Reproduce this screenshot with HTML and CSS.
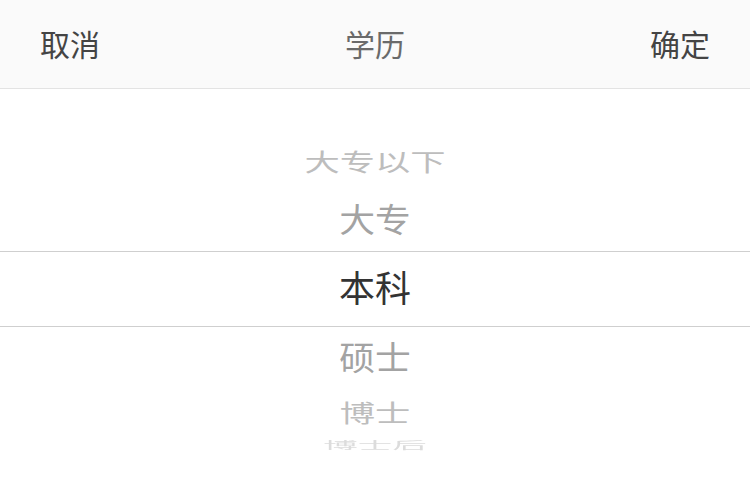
FILE: index.html
```html
<!DOCTYPE html>
<html lang="zh-CN">
<head>
<meta charset="utf-8">
<title>学历</title>
<link rel="stylesheet" href="styles.css">
</head>
<body>
<div class="sheet">
  <div class="toolbar">
    <span class="btn">取消</span>
    <span class="title">学历</span>
    <span class="btn">确定</span>
  </div>
  <div class="picker">
    <ul class="wheel">
      <li class="item pos-m2">大专以下</li>
      <li class="item pos-m1">大专</li>
      <li class="item pos-0">本科</li>
      <li class="item pos-p1">硕士</li>
      <li class="item pos-p2">博士</li>
      <li class="item pos-p3">博士后</li>
    </ul>
    <div class="indicator"></div>
  </div>
</div>
</body>
</html>
```

FILE: styles.css
```css
* { box-sizing: border-box; }
html, body {
  margin: 0;
  padding: 0;
  background: #ffffff;
}
body {
  width: 750px;
  height: 488px;
  overflow: hidden;
  font-family: "Noto Sans CJK SC", "Noto Sans", sans-serif;
}
.sheet {
  display: flex;
  flex-direction: column;
  height: 488px;
}
.toolbar {
  height: 89px;
  flex: none;
  display: flex;
  align-items: center;
  justify-content: space-between;
  padding: 0 40px 0 40px;
  background: #fafafa;
  border-bottom: 1px solid #e3e3e3;
}
.btn {
  font-size: 30px;
  color: #444444;
  line-height: 1;
  padding-bottom: 2px;
}
.title {
  font-size: 30px;
  color: #6a6a6a;
  line-height: 1;
  padding-bottom: 2px;
}
.picker {
  position: relative;
  height: 400px;
  flex: none;
  overflow: hidden;
}
.wheel {
  list-style: none;
  margin: 0;
  padding: 0;
  height: 100%;
  display: grid;
  place-items: center;
  transform: translateY(-3px);
}
.item {
  grid-area: 1 / 1;
  height: 56px;
  line-height: 56px;
  font-size: 36px;
  text-align: center;
  white-space: nowrap;
}
.pos-m2 { color: #bdbdbd; transform: translateY(-126px) scale(0.98, 0.66); }
.pos-m1 { color: #a3a3a3; transform: translateY(-69px) scale(0.995, 0.91); }
.pos-0  { color: #333333; }
.pos-p1 { color: #a3a3a3; transform: translateY(69px) scale(0.995, 0.91); }
.pos-p2 { color: #bdbdbd; transform: translateY(125px) scale(0.98, 0.66); }
.pos-p3 { color: #dcdcdc; transform: translateY(158px) scale(0.96, 0.3); filter: blur(0.5px); }
.indicator {
  position: absolute;
  left: 0;
  right: 0;
  top: 162px;
  height: 76px;
  border-top: 1px solid #cfcfcf;
  border-bottom: 1px solid #cfcfcf;
  pointer-events: none;
}
```
